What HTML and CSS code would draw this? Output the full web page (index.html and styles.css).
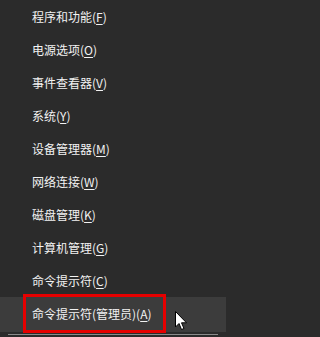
FILE: index.html
```html
<!DOCTYPE html>
<html lang="zh-CN">
<head>
<meta charset="utf-8">
<link rel="stylesheet" href="styles.css">
</head>
<body>
<div class="menu">
  <div class="item">程序和功能(<u>F</u>)</div>
  <div class="item">电源选项(<u>O</u>)</div>
  <div class="item">事件查看器(<u>V</u>)</div>
  <div class="item">系统(<u>Y</u>)</div>
  <div class="item">设备管理器(<u>M</u>)</div>
  <div class="item">网络连接(<u>W</u>)</div>
  <div class="item">磁盘管理(<u>K</u>)</div>
  <div class="item">计算机管理(<u>G</u>)</div>
  <div class="item">命令提示符(<u>C</u>)</div>
  <div class="item active">命令提示符(管理员)(<u>A</u>)</div>
  <div class="sep"></div>
  <div class="mark"></div>
  <svg class="cursor" width="13" height="20" viewBox="0 0 13 20">
    <path d="M0.5 0.5 L0.5 16 L4 12.5 L6.5 18.5 L9 17.5 L6.5 11.8 L11.5 11.8 Z" fill="#fff" stroke="#000" stroke-width="1"/>
  </svg>
</div>
</body>
</html>
```
FILE: styles.css
```css
html, body {
  margin: 0;
  padding: 0;
  background: #2b2b2b;
}
.menu {
  position: relative;
  width: 226px;
  height: 337px;
  overflow: hidden;
  background: #2b2b2b;
  font-family: "Noto Sans CJK SC", "Microsoft YaHei", sans-serif;
  font-size: 12px;
  color: #f2f2f2;
}
.item {
  height: 33px;
  line-height: 33px;
  padding-left: 32px;
  white-space: nowrap;
}
.item u {
  text-decoration: underline;
  text-underline-offset: 2px;
}
.item.active {
  background: #3c3c3c;
  height: 35px;
}
.sep {
  margin: 2px 8px 0 8px;
  height: 1px;
  background: #8a8a8a;
}
.mark {
  position: absolute;
  left: 23px;
  top: 294px;
  width: 137px;
  height: 33px;
  border: 3px solid #e60000;
}
.cursor {
  position: absolute;
  left: 175px;
  top: 311px;
}
```
